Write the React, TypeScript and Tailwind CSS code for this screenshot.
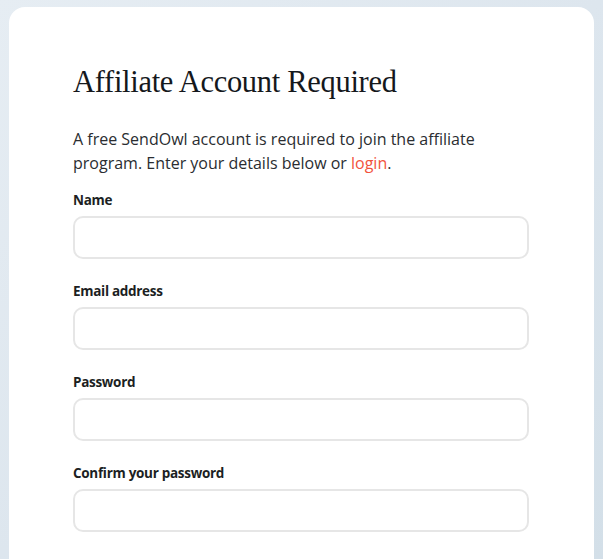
const fields = ['Name', 'Email address', 'Password', 'Confirm your password'];

export default function App() {
  return (
    <div className="min-h-[559px] w-full bg-gradient-to-br from-[#e6edf3] via-[#dde6ee] to-[#d3dfe8] px-[9px] pt-[7px] overflow-hidden h-[559px]">
      <div className="h-[600px] rounded-2xl bg-white pl-[64px] pr-[64px] pt-[57px]">
        <h1
          className="text-[30.5px] leading-[36px] text-[#15181c] tracking-[-0.3px]"
          style={{ fontFamily: '"Liberation Serif", serif' }}
        >
          Affiliate Account Required
        </h1>
        <p
          className="mt-[27px] w-[420px] text-[16px] leading-[24px] text-[#2a2d31]"
          style={{ fontFamily: '"Open Sans", sans-serif' }}
        >
          A free SendOwl account is required to join the affiliate program. Enter your details below or{' '}
          <span className="text-[#f2533d]">login</span>.
        </p>
        <form className="mt-[16px] flex flex-col gap-[23px] w-[456px]" style={{ fontFamily: '"Open Sans", sans-serif' }}>
          {fields.map((f) => (
            <div key={f} className="flex flex-col gap-[7px]">
              <label className="text-[13.5px] leading-[18px] font-bold text-[#1c1f23] tracking-[-0.3px]">{f}</label>
              <input
                type={f.toLowerCase().includes('password') ? 'password' : 'text'}
                className="h-[43px] w-full rounded-[10px] border-2 border-[#e6e6e6] bg-white outline-none"
              />
            </div>
          ))}
        </form>
      </div>
    </div>
  );
}
